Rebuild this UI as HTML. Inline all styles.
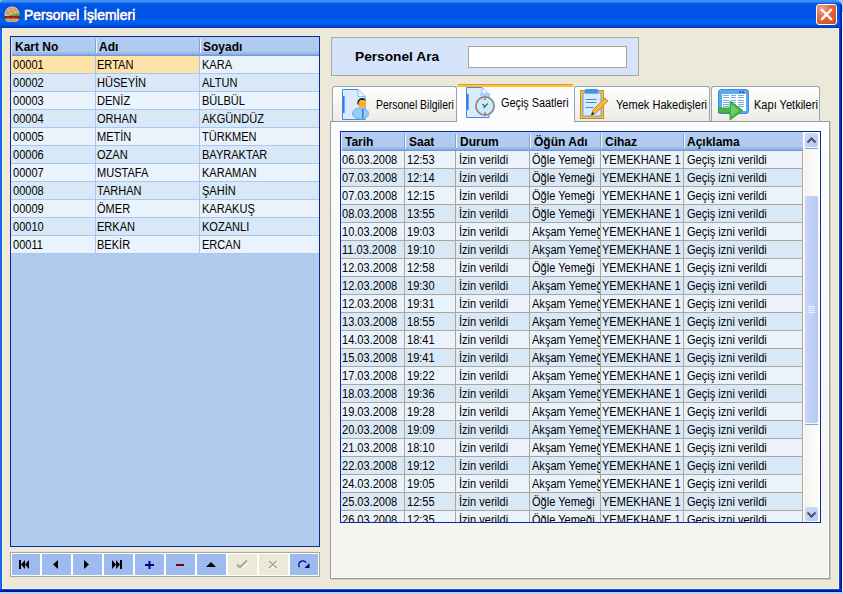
<!DOCTYPE html>
<html><head><meta charset="utf-8">
<style>
*{margin:0;padding:0;box-sizing:border-box}
html,body{width:843px;height:594px;overflow:hidden;background:#AFC6EC}
body{position:relative;font-family:"Liberation Sans",sans-serif;font-size:12px;color:#000}
.a{position:absolute}
.t{display:inline-block;transform:scaleX(.92);transform-origin:0 0;white-space:nowrap}
#win{left:0;top:0;width:842px;height:592px;background:#ECE9D8;border-radius:3px 6px 0 0;overflow:hidden}
#tr{left:839px;top:5px;width:3px;height:23px;background:linear-gradient(to right,#0046E0 0,#0046E0 1px,#0032C0 1px,#0032C0 2px,#0024A8 2px)}
#title{left:0;top:0;width:842px;height:28px;
background:linear-gradient(to bottom,#3D8EF5 0px,#3D8EF5 2px,#0A60EE 3px,#0055E5 5px,#0053E2 17px,#005EF5 20px,#0062F8 22px,#0057EA 24px,#0048D8 26px,#0032B8 28px)}
#lb{left:0;top:28px;width:3px;height:561px;background:linear-gradient(to right,#1E6EF0 0,#1E6EF0 1px,#0055E5 1px,#0055E5 2px,#FFF8DC 2px)}
#rb{left:838px;top:28px;width:4px;height:561px;background:linear-gradient(to right,#FFF8DC 0,#FFF8DC 1px,#0B47E8 1px,#0B47E8 2px,#0030B0 2px,#0030B0 3px,#00139A 3px)}
#bb{left:0;top:588px;width:842px;height:4px;background:linear-gradient(to bottom,#FFF8DC 0,#FFF8DC 1px,#0848EC 1px,#0848EC 2px,#0022A8 2px,#0022A8 3px,#001590 3px)}
#below{left:0;top:592px;width:843px;height:2px;background:#B9D1F3}
#rightout{left:842px;top:12px;width:1px;height:580px;background:#F2F2F8}
#ttext{left:24px;top:7px;font-size:14px;color:#fff;-webkit-text-stroke:0.6px #fff;text-shadow:1px 1px 0 #0A2490;white-space:nowrap;line-height:16px}
#close{left:816px;top:4px;width:21px;height:21px;border-radius:3px;border:1px solid #fff;background:radial-gradient(circle at 25% 20%,#F2A88A 0,#E4693F 40%,#D0481E 100%)}

#lgrid{left:10px;top:36px;width:310px;height:511px;border:1px solid #0A2A9A;background:#B0CBEE;overflow:hidden}
.hdr{position:absolute;left:0;top:0;height:19px;box-shadow:inset 1px 0 0 #E4EEFC;background:linear-gradient(to bottom,#B2CDF0 0,#AFCAEF 15px,#9DBAE8 15px,#9DBAE8 17px,#86A9E0 17px,#86A9E0 18px,#7299DA 18px);font-weight:bold}
.hdr .hc{position:absolute;top:0;line-height:21px;white-space:nowrap}
.hsep{position:absolute;top:2px;height:14px;width:2px;border-left:1px solid #7FA2DB;border-right:1px solid #F4F8FE}
.row{position:absolute;left:0;height:18px}
.cell{position:absolute;top:0;height:17px;line-height:19px;white-space:nowrap;overflow:hidden}
.lrow{width:308px;border-bottom:1px solid #A9C6F2}
.lrow .cell{border-right:1px solid #A9C6F2}
.odd{background:#EAF2FB}
.even{background:#D9E8F6}
.sel{background:#FDE3A5}
.c1{left:0;width:85px;padding-left:2px}
.c2{left:85px;width:104px;padding-left:1px}
.c3{left:189px;width:119px;padding-left:2px;border-right:none!important}

#nav{left:10px;top:552px;width:310px;height:25px;border:1px solid #ACA899;background:#fff}
.nb{position:absolute;top:1px;height:21px;background:#9EBBF0}
.nb.dis{background:#ECE9D8}
.nb svg{position:absolute;left:0;top:0}

#sp{left:331px;top:37px;width:308px;height:39px;background:#D5E4FB;border:1px solid #ACA899}
#splabel{left:23px;top:10px;font-size:13px;font-weight:bold;line-height:18px;transform:scaleX(1.055);transform-origin:0 0}
#spbox{left:136px;top:8px;width:159px;height:22px;background:#fff;border:1px solid #ACA899}

#sheet{left:330px;top:121px;width:500px;height:458px;border:1px solid #919B9C;box-shadow:inset -1px -1px 0 #fff,1px 1px 0 #D0CDBF;background:linear-gradient(to bottom,#FCFCFE 0,#F4F3EE 100%)}
.tab{position:absolute;border:1px solid #91A7B4;border-bottom:none;border-radius:3px 3px 0 0;background:linear-gradient(to bottom,#FFFFFF 0,#F7F7F4 40%,#ECEBE6 100%)}
.tab.act{background:#FCFCFE;border:none}
.tabtxt{position:absolute;white-space:nowrap;line-height:14px}
.tabtop{position:absolute;left:0;top:0;width:100%;height:3px;background:linear-gradient(to bottom,#E5912A 0,#E5912A 1px,#FDC640 1px,#FDC640 2px,#FBC12E 2px);border-radius:3px 3px 0 0}
.tab svg{position:absolute}

#rgrid{left:340px;top:131px;width:481px;height:392px;border:1px solid #0A2A9A;background:#fff;overflow:hidden}
.rrow{width:462px;border-bottom:1px solid #ACA899}
.rrow .cell{border-right:1px solid #ACA899}
.r1{left:0;width:64px;padding-left:1px}
.r2{left:64px;width:51px;padding-left:2px}
.r3{left:115px;width:74px;padding-left:3px}
.r4{left:189px;width:71px;padding-left:2px}
.r5{left:260px;width:83px;padding-left:1px}
.r6{left:343px;width:119px;padding-left:3px}
#vsb{left:462px;top:0;width:17px;height:390px;overflow:hidden;box-shadow:inset 1px 1px 0 #fff;background:linear-gradient(to right,#F3F1EC 0,#FEFEFB 100%)}
.sbtn{position:absolute;left:2px;width:13px;height:14px;border-radius:2px;background:linear-gradient(135deg,#CCDAFB 0,#B6CAF6 100%)}
.thumb{position:absolute;left:2px;top:64px;width:13px;height:227px;border-radius:2px;background:linear-gradient(to right,#C6D5FB 0,#BCCFF8 60%,#B3C8F5 100%)}
</style></head><body>
<div id="win" class="a"><div id="title" class="a"></div></div>
<div id="rightout" class="a"></div>
<div id="bb" class="a"></div><div id="lb" class="a"></div><div id="rb" class="a"></div><div id="below" class="a"></div><div id="tr" class="a"></div>
<svg class="a" style="left:4px;top:6px" width="16" height="16" viewBox="0 0 16 16">
<path d="M1 9.5C1 3.5 4 1 8 1s7 2.5 7 8z" fill="#CF9A63" stroke="#F3E3D0" stroke-width="0.8"/>
<circle cx="5" cy="4.5" r="0.7" fill="#F4E2C8"/><circle cx="9" cy="3.5" r="0.7" fill="#F4E2C8"/><circle cx="11.5" cy="6" r="0.7" fill="#F4E2C8"/><circle cx="7" cy="7" r="0.7" fill="#F4E2C8"/>
<path d="M0.5 10.5L15.5 7.5V10H0.5z" fill="#3FAE33"/>
<path d="M0.5 10h15v3h-15z" fill="#8A2410"/>
<circle cx="4" cy="11.5" r="0.8" fill="#E04020"/><circle cx="10" cy="11.5" r="0.8" fill="#E04020"/>
<path d="M1.5 13h13c0 2-2 2.8-6.5 2.8S1.5 15 1.5 13z" fill="#C99058" stroke="#F3E3D0" stroke-width="0.6"/>
</svg>
<div id="ttext" class="a">Personel İşlemleri</div>
<div id="close" class="a"><svg class="a" style="left:3px;top:3px" width="13" height="13" viewBox="0 0 13 13"><path d="M2 2L11 11M11 2L2 11" stroke="#fff" stroke-width="2.4" stroke-linecap="square"/></svg></div>
<div id="lgrid" class="a"><div class="hdr" style="width:308px"><div class="hsep" style="left:84px"></div><div class="hsep" style="left:188px"></div><div class="hc" style="left:4px">Kart No</div><div class="hc" style="left:88px">Adı</div><div class="hc" style="left:192px">Soyadı</div></div><div class="row lrow odd" style="top:19px"><div class="cell c1 sel"><span class="t">00001</span></div><div class="cell c2 sel"><span class="t">ERTAN</span></div><div class="cell c3"><span class="t">KARA</span></div></div><div class="row lrow even" style="top:37px"><div class="cell c1"><span class="t">00002</span></div><div class="cell c2"><span class="t">HÜSEYİN</span></div><div class="cell c3"><span class="t">ALTUN</span></div></div><div class="row lrow odd" style="top:55px"><div class="cell c1"><span class="t">00003</span></div><div class="cell c2"><span class="t">DENİZ</span></div><div class="cell c3"><span class="t">BÜLBÜL</span></div></div><div class="row lrow even" style="top:73px"><div class="cell c1"><span class="t">00004</span></div><div class="cell c2"><span class="t">ORHAN</span></div><div class="cell c3"><span class="t">AKGÜNDÜZ</span></div></div><div class="row lrow odd" style="top:91px"><div class="cell c1"><span class="t">00005</span></div><div class="cell c2"><span class="t">METİN</span></div><div class="cell c3"><span class="t">TÜRKMEN</span></div></div><div class="row lrow even" style="top:109px"><div class="cell c1"><span class="t">00006</span></div><div class="cell c2"><span class="t">OZAN</span></div><div class="cell c3"><span class="t">BAYRAKTAR</span></div></div><div class="row lrow odd" style="top:127px"><div class="cell c1"><span class="t">00007</span></div><div class="cell c2"><span class="t">MUSTAFA</span></div><div class="cell c3"><span class="t">KARAMAN</span></div></div><div class="row lrow even" style="top:145px"><div class="cell c1"><span class="t">00008</span></div><div class="cell c2"><span class="t">TARHAN</span></div><div class="cell c3"><span class="t">ŞAHİN</span></div></div><div class="row lrow odd" style="top:163px"><div class="cell c1"><span class="t">00009</span></div><div class="cell c2"><span class="t">ÖMER</span></div><div class="cell c3"><span class="t">KARAKUŞ</span></div></div><div class="row lrow even" style="top:181px"><div class="cell c1"><span class="t">00010</span></div><div class="cell c2"><span class="t">ERKAN</span></div><div class="cell c3"><span class="t">KOZANLI</span></div></div><div class="row lrow odd" style="top:199px"><div class="cell c1"><span class="t">00011</span></div><div class="cell c2"><span class="t">BEKİR</span></div><div class="cell c3"><span class="t">ERCAN</span></div></div></div>
<div id="nav" class="a"><div class="nb" style="left:1px;width:28px"><svg width="28" height="21" viewBox="0 0 28 21"><path d="M7 6h2v9H7z M13 6v9l-4-4.5z M17 6v9l-4-4.5z" fill="#000"/></svg></div><div class="nb" style="left:31px;width:29px"><svg width="29" height="21" viewBox="0 0 29 21"><path d="M16 6v9l-5-4.5z" fill="#000"/></svg></div><div class="nb" style="left:62px;width:29px"><svg width="29" height="21" viewBox="0 0 29 21"><path d="M11 6v9l5-4.5z" fill="#000"/></svg></div><div class="nb" style="left:93px;width:29px"><svg width="29" height="21" viewBox="0 0 29 21"><path d="M8 6v9l4-4.5z M12 6v9l4-4.5z M16 6h2v9h-2z" fill="#000"/></svg></div><div class="nb" style="left:124px;width:29px"><svg width="29" height="21" viewBox="0 0 29 21"><path d="M10 10h9v2h-9z M13.5 7h2v8h-2z" fill="#000080" /></svg></div><div class="nb" style="left:155px;width:29px"><svg width="29" height="21" viewBox="0 0 29 21"><path d="M10 10h8v2h-8z" fill="#800000"/></svg></div><div class="nb" style="left:186px;width:29px"><svg width="29" height="21" viewBox="0 0 29 21"><path d="M9 13h10l-5-5z" fill="#000"/></svg></div><div class="nb dis" style="left:217px;width:29px"><svg width="29" height="21" viewBox="0 0 29 21"><path d="M9 10.5l3 3 7-7" stroke="#fff" stroke-width="2.2" fill="none" transform="translate(1,1)"/><path d="M9 10.5l3 3 7-7" stroke="#ACA899" stroke-width="2.2" fill="none"/></svg></div><div class="nb dis" style="left:248px;width:29px"><svg width="29" height="21" viewBox="0 0 29 21"><path d="M10 7l8 7M18 7l-8 7" stroke="#fff" stroke-width="1.6" fill="none" transform="translate(1,1)"/><path d="M10 7l8 7M18 7l-8 7" stroke="#ACA899" stroke-width="1.6" fill="none"/></svg></div><div class="nb" style="left:279px;width:28px"><svg width="28" height="21" viewBox="0 0 28 21"><path d="M9.5 13.2A3.4 3.4 0 1 1 16 8.6" stroke="#000080" stroke-width="1.3" fill="none"/><path d="M19.5 9v5h-5z" fill="#000080"/></svg></div></div>
<div id="sp" class="a"><div id="splabel" class="a">Personel Ara</div><div id="spbox" class="a"></div></div>
<div id="sheet" class="a"></div>
<div class="tab" style="left:332px;top:86px;width:125px;height:35px"><svg style="left:9px;top:2px" width="32" height="32" viewBox="0 0 32 32">
<path d="M0.5 0.5h15.5l7 7V30.5H0.5z" fill="#DCEAFB" stroke="#3D8BE8" stroke-width="1"/>
<path d="M16 0.5v7h7" fill="#EEF5FD" stroke="#8DBAF0" stroke-width="1"/>
<rect x="1" y="7" width="1.6" height="17" fill="#2F7FE2"/>
<ellipse cx="18.5" cy="24.5" rx="8" ry="5.5" fill="#9ACBF4" stroke="#62A6EA" stroke-width="1"/>
<circle cx="20" cy="14.5" r="4.3" fill="#F5B02E"/>
<path d="M15.5 15a4.6 4.6 0 0 1 9-2.5l-1.5-1.5h-5l-1.5 2.5v2.5z" fill="#151515"/>
<path d="M20 20h1.6v9H20z" fill="#2F86E0"/>
</svg><div class="tabtxt" style="left:43px;top:11px"><span class="t" style="transform:scaleX(0.87)">Personel Bilgileri</span></div></div>
<div class="tab" style="left:574px;top:86px;width:136px;height:35px"><svg style="left:5px;top:1px" width="32" height="32" viewBox="0 0 32 32">
<rect x="0.5" y="2.5" width="23" height="28" fill="#F6C343" stroke="#C88B2A" stroke-width="1"/>
<rect x="3" y="5" width="18" height="23" fill="#DCEBFB" stroke="#5EA1E8" stroke-width="1"/>
<rect x="4.5" y="1" width="14" height="4.5" rx="2" fill="#3F93EA"/>
<path d="M5.5 11.5h11M5.5 14.5h11M5.5 19.5h8" stroke="#3D8BE8" stroke-width="1"/>
<path d="M11.5 26.5l1.5-4.5 12-12 3 3-12 12z" fill="#F4B740" stroke="#D08E22" stroke-width="1"/>
<path d="M11 27.5l1.5-3.5 2 2z" fill="#1A1A2A"/>
</svg><div class="tabtxt" style="left:41px;top:11px"><span class="t">Yemek Hakedişleri</span></div></div>
<div class="tab" style="left:711px;top:86px;width:109px;height:35px"><svg style="left:6px;top:2px" width="34" height="32" viewBox="0 0 34 32">
<rect x="0.5" y="0.5" width="30" height="24" rx="2.5" fill="#5AAAF2" stroke="#3D8BE8" stroke-width="1"/>
<rect x="4" y="5" width="24" height="17" fill="#FDFEFF"/>
<rect x="21" y="2" width="2" height="2" fill="#1F6FD8"/><rect x="24" y="2" width="2" height="2" fill="#1F6FD8"/><rect x="27" y="2" width="2" height="2" fill="#F08A20"/>
<path d="M5 6.5h6M13 6.5h5M20 6.5h6M5 8.5h6M13 8.5h5M20 8.5h6M5 11.5h6M13 11.5h5M20 11.5h6M5 13.5h6M13 13.5h5M20 13.5h6M5 15.5h6M13 15.5h5M20 15.5h6M5 17.5h6M13 17.5h5M20 17.5h6" stroke="#6FB0F0" stroke-width="1"/>
<path d="M0 19h12v-7l13 9.5-13 9.5v-7H0z" fill="#47B444" stroke="#2C9A2F" stroke-width="0.8"/>
<path d="M13 15l8 6.5-8 6z" fill="#8ED88A" opacity="0.6"/>
</svg><div class="tabtxt" style="left:42px;top:11px"><span class="t">Kapı Yetkileri</span></div></div>
<div class="tab act" style="left:457px;top:84px;width:117px;height:38px"><div class="tabtop"></div><svg style="left:9px;top:3px" width="32" height="32" viewBox="0 0 32 32">
<path d="M0.5 0.5h15.5l7 7V30.5H0.5z" fill="#DCEAFB" stroke="#3D8BE8" stroke-width="1"/>
<path d="M16 0.5v7h7" fill="#EEF5FD" stroke="#8DBAF0" stroke-width="1"/>
<rect x="1" y="7" width="1.6" height="16" fill="#2F7FE2"/>
<rect x="14" y="6" width="10" height="3.5" fill="#A9D2F5"/>
<circle cx="19" cy="19" r="9" fill="#C9ECFA" stroke="#8A8A8A" stroke-width="2"/>
<circle cx="19" cy="19" r="7.6" fill="none" stroke="#E9E9E9" stroke-width="0.8"/>
<path d="M16.5 17l2.5 2.5 3-3M19 19.5l-1.5 1.5" stroke="#555" stroke-width="1.1" fill="none"/>
<rect x="18" y="11.5" width="2" height="1.3" fill="#E8503A"/>
<rect x="18" y="25.5" width="2" height="1.3" fill="#E8503A"/>
</svg><div class="tabtxt" style="left:44px;top:12px"><span class="t" style="transform:scaleX(0.905)">Geçiş Saatleri</span></div></div>
<div id="rgrid" class="a"><div class="hdr" style="width:462px"><div class="hsep" style="left:63px"></div><div class="hsep" style="left:114px"></div><div class="hsep" style="left:188px"></div><div class="hsep" style="left:259px"></div><div class="hsep" style="left:342px"></div><div class="hc" style="left:4px">Tarih</div><div class="hc" style="left:68px">Saat</div><div class="hc" style="left:119px">Durum</div><div class="hc" style="left:193px">Öğün Adı</div><div class="hc" style="left:264px">Cihaz</div><div class="hc" style="left:346px">Açıklama</div></div><div class="row rrow odd" style="top:19px"><div class="cell r1"><span class="t">06.03.2008</span></div><div class="cell r2"><span class="t">12:53</span></div><div class="cell r3"><span class="t">İzin verildi</span></div><div class="cell r4"><span class="t">Öğle Yemeği</span></div><div class="cell r5"><span class="t">YEMEKHANE 1</span></div><div class="cell r6"><span class="t">Geçiş izni verildi</span></div></div><div class="row rrow even" style="top:37px"><div class="cell r1"><span class="t">07.03.2008</span></div><div class="cell r2"><span class="t">12:14</span></div><div class="cell r3"><span class="t">İzin verildi</span></div><div class="cell r4"><span class="t">Öğle Yemeği</span></div><div class="cell r5"><span class="t">YEMEKHANE 1</span></div><div class="cell r6"><span class="t">Geçiş izni verildi</span></div></div><div class="row rrow odd" style="top:55px"><div class="cell r1"><span class="t">07.03.2008</span></div><div class="cell r2"><span class="t">12:15</span></div><div class="cell r3"><span class="t">İzin verildi</span></div><div class="cell r4"><span class="t">Öğle Yemeği</span></div><div class="cell r5"><span class="t">YEMEKHANE 1</span></div><div class="cell r6"><span class="t">Geçiş izni verildi</span></div></div><div class="row rrow even" style="top:73px"><div class="cell r1"><span class="t">08.03.2008</span></div><div class="cell r2"><span class="t">13:55</span></div><div class="cell r3"><span class="t">İzin verildi</span></div><div class="cell r4"><span class="t">Öğle Yemeği</span></div><div class="cell r5"><span class="t">YEMEKHANE 1</span></div><div class="cell r6"><span class="t">Geçiş izni verildi</span></div></div><div class="row rrow odd" style="top:91px"><div class="cell r1"><span class="t">10.03.2008</span></div><div class="cell r2"><span class="t">19:03</span></div><div class="cell r3"><span class="t">İzin verildi</span></div><div class="cell r4"><span class="t">Akşam Yemeği</span></div><div class="cell r5"><span class="t">YEMEKHANE 1</span></div><div class="cell r6"><span class="t">Geçiş izni verildi</span></div></div><div class="row rrow even" style="top:109px"><div class="cell r1"><span class="t">11.03.2008</span></div><div class="cell r2"><span class="t">19:10</span></div><div class="cell r3"><span class="t">İzin verildi</span></div><div class="cell r4"><span class="t">Akşam Yemeği</span></div><div class="cell r5"><span class="t">YEMEKHANE 1</span></div><div class="cell r6"><span class="t">Geçiş izni verildi</span></div></div><div class="row rrow odd" style="top:127px"><div class="cell r1"><span class="t">12.03.2008</span></div><div class="cell r2"><span class="t">12:58</span></div><div class="cell r3"><span class="t">İzin verildi</span></div><div class="cell r4"><span class="t">Öğle Yemeği</span></div><div class="cell r5"><span class="t">YEMEKHANE 1</span></div><div class="cell r6"><span class="t">Geçiş izni verildi</span></div></div><div class="row rrow even" style="top:145px"><div class="cell r1"><span class="t">12.03.2008</span></div><div class="cell r2"><span class="t">19:30</span></div><div class="cell r3"><span class="t">İzin verildi</span></div><div class="cell r4"><span class="t">Akşam Yemeği</span></div><div class="cell r5"><span class="t">YEMEKHANE 1</span></div><div class="cell r6"><span class="t">Geçiş izni verildi</span></div></div><div class="row rrow odd" style="top:163px"><div class="cell r1"><span class="t">12.03.2008</span></div><div class="cell r2"><span class="t">19:31</span></div><div class="cell r3"><span class="t">İzin verildi</span></div><div class="cell r4"><span class="t">Akşam Yemeği</span></div><div class="cell r5"><span class="t">YEMEKHANE 1</span></div><div class="cell r6"><span class="t">Geçiş izni verildi</span></div></div><div class="row rrow even" style="top:181px"><div class="cell r1"><span class="t">13.03.2008</span></div><div class="cell r2"><span class="t">18:55</span></div><div class="cell r3"><span class="t">İzin verildi</span></div><div class="cell r4"><span class="t">Akşam Yemeği</span></div><div class="cell r5"><span class="t">YEMEKHANE 1</span></div><div class="cell r6"><span class="t">Geçiş izni verildi</span></div></div><div class="row rrow odd" style="top:199px"><div class="cell r1"><span class="t">14.03.2008</span></div><div class="cell r2"><span class="t">18:41</span></div><div class="cell r3"><span class="t">İzin verildi</span></div><div class="cell r4"><span class="t">Akşam Yemeği</span></div><div class="cell r5"><span class="t">YEMEKHANE 1</span></div><div class="cell r6"><span class="t">Geçiş izni verildi</span></div></div><div class="row rrow even" style="top:217px"><div class="cell r1"><span class="t">15.03.2008</span></div><div class="cell r2"><span class="t">19:41</span></div><div class="cell r3"><span class="t">İzin verildi</span></div><div class="cell r4"><span class="t">Akşam Yemeği</span></div><div class="cell r5"><span class="t">YEMEKHANE 1</span></div><div class="cell r6"><span class="t">Geçiş izni verildi</span></div></div><div class="row rrow odd" style="top:235px"><div class="cell r1"><span class="t">17.03.2008</span></div><div class="cell r2"><span class="t">19:22</span></div><div class="cell r3"><span class="t">İzin verildi</span></div><div class="cell r4"><span class="t">Akşam Yemeği</span></div><div class="cell r5"><span class="t">YEMEKHANE 1</span></div><div class="cell r6"><span class="t">Geçiş izni verildi</span></div></div><div class="row rrow even" style="top:253px"><div class="cell r1"><span class="t">18.03.2008</span></div><div class="cell r2"><span class="t">19:36</span></div><div class="cell r3"><span class="t">İzin verildi</span></div><div class="cell r4"><span class="t">Akşam Yemeği</span></div><div class="cell r5"><span class="t">YEMEKHANE 1</span></div><div class="cell r6"><span class="t">Geçiş izni verildi</span></div></div><div class="row rrow odd" style="top:271px"><div class="cell r1"><span class="t">19.03.2008</span></div><div class="cell r2"><span class="t">19:28</span></div><div class="cell r3"><span class="t">İzin verildi</span></div><div class="cell r4"><span class="t">Akşam Yemeği</span></div><div class="cell r5"><span class="t">YEMEKHANE 1</span></div><div class="cell r6"><span class="t">Geçiş izni verildi</span></div></div><div class="row rrow even" style="top:289px"><div class="cell r1"><span class="t">20.03.2008</span></div><div class="cell r2"><span class="t">19:09</span></div><div class="cell r3"><span class="t">İzin verildi</span></div><div class="cell r4"><span class="t">Akşam Yemeği</span></div><div class="cell r5"><span class="t">YEMEKHANE 1</span></div><div class="cell r6"><span class="t">Geçiş izni verildi</span></div></div><div class="row rrow odd" style="top:307px"><div class="cell r1"><span class="t">21.03.2008</span></div><div class="cell r2"><span class="t">18:10</span></div><div class="cell r3"><span class="t">İzin verildi</span></div><div class="cell r4"><span class="t">Akşam Yemeği</span></div><div class="cell r5"><span class="t">YEMEKHANE 1</span></div><div class="cell r6"><span class="t">Geçiş izni verildi</span></div></div><div class="row rrow even" style="top:325px"><div class="cell r1"><span class="t">22.03.2008</span></div><div class="cell r2"><span class="t">19:12</span></div><div class="cell r3"><span class="t">İzin verildi</span></div><div class="cell r4"><span class="t">Akşam Yemeği</span></div><div class="cell r5"><span class="t">YEMEKHANE 1</span></div><div class="cell r6"><span class="t">Geçiş izni verildi</span></div></div><div class="row rrow odd" style="top:343px"><div class="cell r1"><span class="t">24.03.2008</span></div><div class="cell r2"><span class="t">19:05</span></div><div class="cell r3"><span class="t">İzin verildi</span></div><div class="cell r4"><span class="t">Akşam Yemeği</span></div><div class="cell r5"><span class="t">YEMEKHANE 1</span></div><div class="cell r6"><span class="t">Geçiş izni verildi</span></div></div><div class="row rrow even" style="top:361px"><div class="cell r1"><span class="t">25.03.2008</span></div><div class="cell r2"><span class="t">12:55</span></div><div class="cell r3"><span class="t">İzin verildi</span></div><div class="cell r4"><span class="t">Öğle Yemeği</span></div><div class="cell r5"><span class="t">YEMEKHANE 1</span></div><div class="cell r6"><span class="t">Geçiş izni verildi</span></div></div><div class="row rrow odd" style="top:379px"><div class="cell r1"><span class="t">26.03.2008</span></div><div class="cell r2"><span class="t">12:35</span></div><div class="cell r3"><span class="t">İzin verildi</span></div><div class="cell r4"><span class="t">Öğle Yemeği</span></div><div class="cell r5"><span class="t">YEMEKHANE 1</span></div><div class="cell r6"><span class="t">Geçiş izni verildi</span></div></div><div id="vsb" class="a"><div class="a" style="left:2px;top:16px;width:13px;height:1px;background:#7FA4E0"></div><div class="a" style="left:2px;top:391px;width:13px;height:1px;background:#7FA4E0"></div><div class="a" style="left:2px;top:292px;width:13px;height:1px;background:#7FA4E0"></div><div class="sbtn" style="top:1px"><svg width="13" height="14" viewBox="0 0 13 14"><path d="M2.5 9.5l4-4 4 4" stroke="#4D4D6A" stroke-width="2" fill="none"/></svg></div><div class="thumb"><svg style="position:absolute;left:3px;top:110px" width="7" height="7" viewBox="0 0 7 7"><path d="M0 .5h7M0 2.5h7M0 4.5h7M0 6.5h7" stroke="#EEF3FE" stroke-width="1"/></svg></div><div class="sbtn" style="top:375px"><svg width="13" height="14" viewBox="0 0 13 14"><path d="M2.5 5.5l4 4 4-4" stroke="#4D4D6A" stroke-width="2" fill="none"/></svg></div></div></div>
</body></html>
